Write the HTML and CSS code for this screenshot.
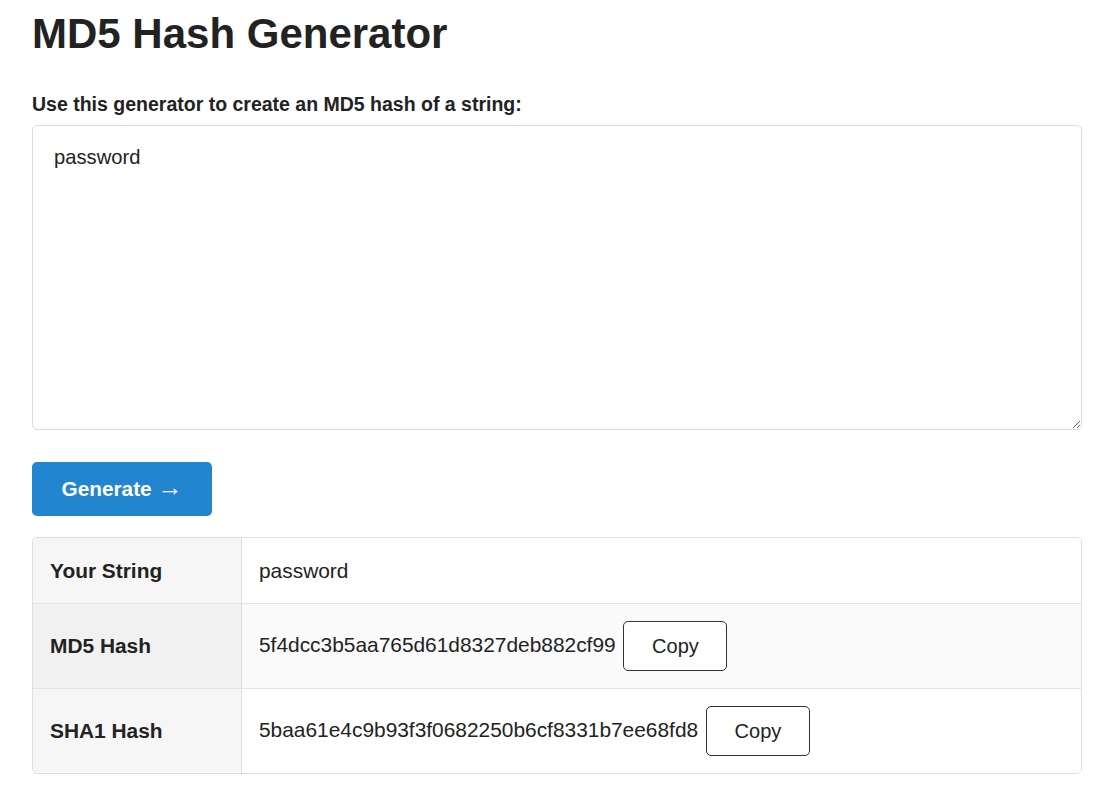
FILE: index.html
```html
<!DOCTYPE html>
<html lang="en">
<head>
<meta charset="utf-8">
<title>MD5 Hash Generator</title>
<link rel="stylesheet" href="styles.css">
</head>
<body>
<main class="page">
  <h1 class="title">MD5 Hash Generator</h1>
  <form class="gen-form">
    <label class="form-label" for="input">Use this generator to create an MD5 hash of a string:</label>
    <textarea id="input" class="input-area">password</textarea>
    <button type="button" class="btn-generate">Generate <span class="arrow">&rarr;</span></button>
  </form>
  <table class="results">
    <tbody>
      <tr class="row row-first">
        <th class="cell-head">Your String</th>
        <td class="cell-val">password</td>
      </tr>
      <tr class="row row-alt">
        <th class="cell-head">MD5 Hash</th>
        <td class="cell-val">5f4dcc3b5aa765d61d8327deb882cf99 <button type="button" class="btn-copy">Copy</button></td>
      </tr>
      <tr class="row">
        <th class="cell-head">SHA1 Hash</th>
        <td class="cell-val">5baa61e4c9b93f3f0682250b6cf8331b7ee68fd8 <button type="button" class="btn-copy">Copy</button></td>
      </tr>
    </tbody>
  </table>
</main>
</body>
</html>
```

FILE: styles.css
```css
* { box-sizing: border-box; }
html, body { margin: 0; padding: 0; background: #fff; }
body {
  font-family: "Liberation Sans", Arial, sans-serif;
  color: #222;
}
.page {
  width: 1050px;
  margin-left: 32px;
  padding-top: 10px;
}
.title {
  margin: 0;
  font-size: 42px;
  font-weight: bold;
  line-height: 48px;
}
.gen-form {
  display: flex;
  flex-direction: column;
  align-items: flex-start;
  margin-top: 36px;
}
.form-label {
  font-size: 19.5px;
  font-weight: bold;
  line-height: 21px;
}
.input-area {
  margin-top: 10px;
  width: 1050px;
  height: 305px;
  border: 1px solid #dcdcdc;
  border-radius: 5px;
  padding: 20px 21px;
  font-family: "Liberation Sans", Arial, sans-serif;
  font-size: 20.2px;
  line-height: 23px;
  color: #222;
  resize: vertical;
  outline: none;
}
.btn-generate {
  margin-top: 32px;
  height: 54px;
  width: 180px;
  border: none;
  border-radius: 5px;
  background: #2185d0;
  color: #fff;
  font-family: "Liberation Sans", Arial, sans-serif;
  font-size: 20.8px;
  font-weight: bold;
  line-height: 24px;
  padding: 0 0 1px;
}
.arrow {
  font-family: "Liberation Sans", Arial, sans-serif;
  font-weight: normal;
  font-size: 25px;
  line-height: 0;
}
.results {
  margin-top: 21px;
  width: 1050px;
  border-collapse: separate;
  border-spacing: 0;
  border: 1px solid #dedede;
  border-radius: 5px;
  overflow: hidden;
  font-size: 20.9px;
}
.cell-head {
  width: 209px;
  text-align: left;
  font-weight: bold;
  padding: 0 17px;
  background: #f6f6f6;
  border-right: 1px solid #dedede;
  vertical-align: middle;
}
.cell-val {
  padding: 0 17px;
  vertical-align: middle;
  background: #fff;
}
.row { height: 85px; }
.row-first { height: 65px; }
.row + .row .cell-head,
.row + .row .cell-val { border-top: 1px solid #e3e3e3; }
.row-alt .cell-head { background: #f1f1f1; }
.row-alt .cell-val { background: #fafafa; }
.btn-copy {
  height: 50px;
  width: 104px;
  margin-left: 2px;
  vertical-align: middle;
  border: 1px solid #333;
  border-radius: 5px;
  background: #fff;
  color: #222;
  font-family: "Liberation Sans", Arial, sans-serif;
  font-size: 20px;
  padding: 0;
}
```
